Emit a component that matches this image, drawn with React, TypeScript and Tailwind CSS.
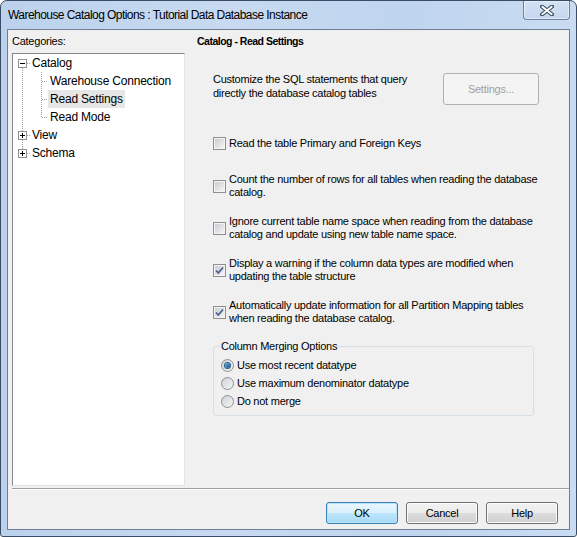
import React from "react"

const ui = "font-['Liberation_Sans',Arial,sans-serif] text-[11px] leading-[13px] tracking-[-0.25px] text-black"

function Checkbox({ checked }: { checked?: boolean }) {
  return (
    <span className="flex h-[13px] w-[13px] shrink-0 items-center justify-center border border-[#8e8f8f] bg-[#f4f4f4]">
      <span className="flex h-[9px] w-[9px] items-center justify-center bg-gradient-to-br from-[#c9cdd2] to-[#f4f4f4]">
        {checked && (
          <svg width="9" height="9" viewBox="0 0 9 9">
            <path d="M1 4.5 L3.3 7 L8 1.5" fill="none" stroke="#4b5f95" strokeWidth="1.8" />
          </svg>
        )}
      </span>
    </span>
  )
}

function Radio({ checked }: { checked?: boolean }) {
  return (
    <span className="flex h-[13px] w-[13px] shrink-0 items-center justify-center rounded-full border border-[#8e8f8f] bg-gradient-to-br from-[#cfd2d6] to-[#f6f6f6]">
      {checked && (
        <span className="h-[5px] w-[5px] rounded-full bg-gradient-to-br from-[#6ab4e6] to-[#0e4c82] shadow-[0_0_0_1px_#2b5f8a]" />
      )}
    </span>
  )
}

type TreeRow = {
  label: string
  level: 0 | 1
  expander?: "+" | "-"
  up?: boolean
  down?: boolean
  selected?: boolean
}

const rows: TreeRow[] = [
  { label: "Catalog", level: 0, expander: "-", down: true },
  { label: "Warehouse Connection", level: 1, down: true },
  { label: "Read Settings", level: 1, down: true, selected: true },
  { label: "Read Mode", level: 1 },
  { label: "View", level: 0, expander: "+", up: true, down: true },
  { label: "Schema", level: 0, expander: "+", up: true },
]

function Connector({ row }: { row: TreeRow }) {
  const dot = { stroke: "#a0a0a0", strokeDasharray: "1 1" }
  if (row.level === 0) {
    return (
      <svg width="17" height="18" className="shrink-0">
        {row.up && <line x1="9.5" y1="0" x2="9.5" y2="9" {...dot} />}
        {row.down && <line x1="9.5" y1="10" x2="9.5" y2="18" {...dot} />}
        <line x1="14" y1="9.5" x2="17" y2="9.5" {...dot} />
        {row.expander && (
          <>
            <rect x="5.5" y="5.5" width="8" height="8" fill="#fff" stroke="#919191" />
            <line x1="7" y1="9.5" x2="12" y2="9.5" stroke="#000" />
            {row.expander === "+" && <line x1="9.5" y1="7" x2="9.5" y2="12" stroke="#000" />}
          </>
        )}
      </svg>
    )
  }
  return (
    <svg width="35" height="18" className="shrink-0">
      <line x1="9.5" y1="0" x2="9.5" y2="18" {...dot} />
      <line x1="28.5" y1="0" x2="28.5" y2={row.down ? 18 : 10} {...dot} />
      <line x1="29" y1="9.5" x2="35" y2="9.5" {...dot} />
    </svg>
  )
}

function Btn({ label, primary, disabled, className = "" }: { label: string; primary?: boolean; disabled?: boolean; className?: string }) {
  if (disabled) {
    return (
      <div className={`flex items-center justify-center rounded-[3px] border border-[#adb2b5] bg-[#f4f4f4] text-[#a0a0a0] ${className}`}>
        {label}
      </div>
    )
  }
  return (
    <div
      className={`flex h-[22px] w-[72px] items-center justify-center rounded-[3px] border ${
        primary
          ? "border-[#3c7fb1] bg-[linear-gradient(#eaf6fd,#d9f0fc_50%,#bee6fd_50%,#a7d9f5)] shadow-[inset_0_0_0_1px_#b8e4fd]"
          : "border-[#707070] bg-[linear-gradient(#f2f2f2,#ebebeb_50%,#dddddd_50%,#cfcfcf)] shadow-[inset_0_0_0_1px_#fcfcfc]"
      }`}
    >
      {label}
    </div>
  )
}

function Option({ checked, lines }: { checked?: boolean; lines: string[] }) {
  return (
    <div className="flex items-center">
      <Checkbox checked={checked} />
      <div className="pl-[3px]">
        {lines.map((l) => (
          <div key={l}>{l}</div>
        ))}
      </div>
    </div>
  )
}

export default function App() {
  return (
    <div className={`${ui} flex h-[537px] w-[577px] flex-col overflow-hidden rounded-t-[7px] rounded-b-[3px] border border-[#3a4d66] bg-[linear-gradient(90deg,#bcd1ec,#c7daf1_40%,#bfd4ee_70%,#c9dcf2)]`}>
      {/* title bar */}
      <div className="flex h-[28px] shrink-0 items-start">
        <div className="mt-[7px] pl-[7px] text-[12px] leading-[14px] tracking-[-0.55px]">
          Warehouse Catalog Options : Tutorial Data Database Instance
        </div>
        <div className="ml-auto mr-[6px] flex h-[19px] w-[47px] items-center justify-center rounded-b-[4px] border border-t-0 border-[#6f83a0] bg-[linear-gradient(#d5e3f4,#c4d6ee)] shadow-[inset_0_0_0_1px_#e4edf8]">
          <svg width="14" height="11" viewBox="0 0 14 11">
            <path d="M2 1.5 L12 9.5 M12 1.5 L2 9.5" stroke="#3b4a5c" strokeWidth="4" strokeLinecap="round" />
            <path d="M2.3 1.8 L11.7 9.2 M11.7 1.8 L2.3 9.2" stroke="#fff" strokeWidth="2" strokeLinecap="round" />
          </svg>
        </div>
      </div>

      {/* client */}
      <div className="mx-[6px] mb-[7px] flex flex-1 flex-col border border-[#6f7f95] bg-[#f0f0f0]">
        <div className="flex flex-1">
          {/* categories */}
          <div className="ml-[4px] flex w-[173px] flex-col pt-[5px]">
            <div>
              Cate<span className="underline">g</span>ories:
            </div>
            <div className="mt-[5px] h-[433px] border border-[#828790] border-b-[#e3e3e3] border-r-[#e3e3e3] bg-white text-[12px] tracking-[-0.2px]">
              {rows.map((r) => (
                <div key={r.label} className="flex h-[18px] items-center">
                  <Connector row={r} />
                  <div className={`flex h-[18px] items-center px-[2px] ${r.selected ? "bg-[#e6e6e6]" : ""}`}>{r.label}</div>
                </div>
              ))}
            </div>
          </div>

          {/* settings panel */}
          <div className="ml-[12px] flex flex-1 flex-col pt-[5px]">
            <div className="text-[10.5px] font-bold tracking-[-0.5px]">Catalog - Read Settings</div>

            <div className="ml-[16px] mt-[24px] flex items-start">
              <div className="w-[230px] leading-[14px]">
                <div>Customize the SQL statements that query</div>
                <div>directly the database catalog tables</div>
              </div>
              <Btn label="Settings..." disabled className="mt-[1px] h-[32px] w-[96px]" />
            </div>

            <div className="ml-[16px] mt-[32px] flex flex-col">
              <Option lines={["Read the table Primary and Foreign Keys"]} />
              <div className="mt-[23px]">
                <Option lines={["Count the number of rows for all tables when reading the database", "catalog."]} />
              </div>
              <div className="mt-[16px]">
                <Option lines={["Ignore current table name space when reading from the database", "catalog and update using new table name space."]} />
              </div>
              <div className="mt-[16px]">
                <Option checked lines={["Display a warning if the column data types are modified when", "updating the table structure"]} />
              </div>
              <div className="mt-[16px]">
                <Option checked lines={["Automatically update information for all Partition Mapping tables", "when reading the database catalog."]} />
              </div>
            </div>

            <fieldset className="ml-[16px] mt-[15px] w-[321px] rounded-[3px] border border-[#d5dfe5] pb-[5px] pl-[6px] pt-[3px]">
              <legend className="px-[1px]">Column Merging Options</legend>
              {["Use most recent datatype", "Use maximum denominator datatype", "Do not merge"].map((t, i) => (
                <div key={t} className="ml-[1px] flex h-[18px] items-center">
                  <Radio checked={i === 0} />
                  <span className="pl-[3px]">{t}</span>
                </div>
              ))}
            </fieldset>
          </div>
        </div>

        {/* separator + buttons */}
        <div className="ml-[4px] mt-[2px] h-[2px] border-t border-b border-t-[#a0a0a0] border-b-white" />
        <div className="flex justify-end gap-[8px] pb-[5px] pr-[11px] pt-[12px]">
          <Btn label="OK" primary />
          <Btn label="Cancel" />
          <Btn label="Help" />
        </div>
      </div>
    </div>
  )
}
